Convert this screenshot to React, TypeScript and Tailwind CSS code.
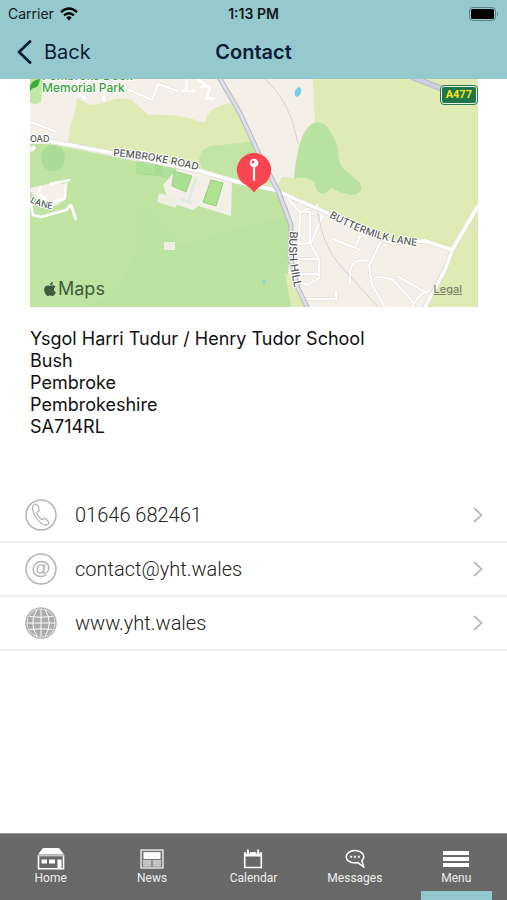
import type { ReactNode } from "react";
import { FaApple } from "react-icons/fa";

type ContactRow = {
  label: string;
  href: string;
  icon: ReactNode;
};

type Tab = {
  label: string;
  icon: ReactNode;
  active?: boolean;
};

const address = ["Ysgol Harri Tudur / Henry Tudor School", "Bush", "Pembroke", "Pembrokeshire", "SA714RL"];

function WifiIcon() {
  return (
    <svg viewBox="0 0 18 14" className="w-[18px] h-[14px]" aria-hidden="true">
      <g fill="none" stroke="#000" strokeWidth="2.4">
        <path d="M1 5.2Q9-2 17 5.2" />
        <path d="M4 8.4q5-4.400 10 0" />
      </g>
      <path d="M6.200 10.400q2.800-2.400 5.600 0L9 13.400z" />
    </svg>
  );
}

function BatteryIcon() {
  return (
    <svg viewBox="0 0 30 14" className="w-[30px] h-[14px]" aria-hidden="true">
      <rect x="0.500" y="0.500" width="26" height="13" rx="3.500" fill="none" stroke="#5d8286" />
      <rect x="2" y="2" width="23" height="10" rx="1.500" />
      <path d="M28 4.500q2 2.500 0 5z" fill="#5d8286" />
    </svg>
  );
}

function PhoneIcon() {
  return (
    <svg viewBox="0 0 32 32" className="w-8 h-8" fill="none" stroke="#b4b4b4" aria-hidden="true">
      <circle cx="16" cy="16" r="15" strokeWidth="1.500" />
      <path
        d="M9 5.500c-2.500 1.500-1.800 6.500 1.200 11.500 3 5 7.500 9.300 10.800 9 1.600-.2 3-1 2.800-2.500-.2-1.500-3-4-4.600-4-1.400 0-1.600 1.500-2.700 1-1.500-.8-4.500-5-4.500-6.800 0-1.300 1.900-.9 2.100-2.400.2-2-1.300-5.300-2.700-6-.8-.4-1.700-.2-2.400.2z"
        strokeWidth="1.300"
        strokeLinejoin="round"
      />
    </svg>
  );
}

function AtIcon() {
  return (
    <svg viewBox="0 0 32 32" className="w-8 h-8" fill="none" stroke="#b4b4b4" aria-hidden="true">
      <circle cx="16" cy="16" r="15" strokeWidth="1.500" />
      <g strokeWidth="1.500" strokeLinecap="round">
        <ellipse cx="15.600" cy="16" rx="3.300" ry="4.200" transform="rotate(20 15.600 16)" />
        <path d="M19.600 11.800l-1.200 6.200c-.3 1.600.4 2.300 1.400 2.200 2.200-.3 4-2.800 4-5.400 0-3.600-3-6.300-7.200-6.300-4.800 0-8.400 3.400-8.400 7.900 0 4.200 3.200 7.100 7.600 7.100 2 0 3.600-.4 5-1.300" />
      </g>
    </svg>
  );
}

function GlobeIcon() {
  return (
    <svg viewBox="0 0 32 32" className="w-8 h-8" aria-hidden="true">
      <circle cx="16" cy="16" r="15" fill="#fff" stroke="#b4b4b4" strokeWidth="1.500" />
      <circle cx="16" cy="16" r="13.700" fill="#acacac" />
      <g fill="none" stroke="#fff" strokeWidth="1">
        <path d="M16 2v28M2 16h28M4.500 9.500q11.500 1.500 23 0M4.500 22.500q11.500-1.500 23 0" />
        <path d="M12 2.500Q3.500 16 12 29.500M20 2.500Q28.500 16 20 29.500" />
      </g>
    </svg>
  );
}

function HomeIcon() {
  return (
    <svg viewBox="0 0 28 22" className="w-7 h-[22px]" aria-hidden="true">
      <path d="M6 0h16l5 6.500H1z" fill="#fff" />
      <path d="M1.500 7v13.700h25V7" fill="none" stroke="#fff" strokeWidth="1.600" />
      <path d="M1 7.600h26" stroke="#c4c4c4" strokeWidth="1.600" />
      <path d="M4.500 11.500h5.500v4H4.500zM12 11.500h6v4h-6zM20.500 11.500h4v9h-4z" fill="#fff" />
    </svg>
  );
}

function NewsIcon() {
  return (
    <svg viewBox="0 0 24 20" className="w-6 h-5" aria-hidden="true">
      <rect x="1" y="1" width="22" height="18" fill="#777" stroke="#fff" strokeWidth="1.200" />
      <path d="M3.500 3.200h17V10h-17z" fill="#fff" />
      <path d="M3 11h8.300v6.500H3zM12.700 11H21v6.500h-8.300z" fill="#cfcfcf" />
      <path d="M3 13h18M3 15.300h18" stroke="#999" strokeWidth="0.500" />
    </svg>
  );
}

function CalendarIcon() {
  return (
    <svg viewBox="0 0 20 20" className="w-5 h-5" aria-hidden="true">
      <path d="M1.700 4h16.600v14.500H1.700z" fill="none" stroke="#fff" strokeWidth="1.600" />
      <path d="M1 3.500h18v4H1zM4 .5h1.800v4H4zM14.200.5H16v4h-1.800z" fill="#fff" />
      <path d="M3.200 3v2M6.600 3v2M13.400 3v2M16.800 3v2" stroke="#686868" strokeWidth="0.800" />
    </svg>
  );
}

function MessagesIcon() {
  return (
    <svg viewBox="0 0 20 20" className="w-5 h-5" aria-hidden="true">
      <path
        d="M10 1.500c-5 0-8.800 2.700-8.800 6.200s3.800 6.200 8.800 6.200c1 0 2-.1 2.900-.3l6 4.600-2.100-6.400c1.300-1.200 2-2.500 2-4.100 0-3.500-3.800-6.200-8.800-6.200z"
        fill="none"
        stroke="#fff"
        strokeWidth="1.500"
        strokeLinejoin="round"
      />
      <path d="M5.200 6.700h2v2h-2zM9 6.700h2v2H9zM12.800 6.700h2v2h-2z" fill="#fff" />
    </svg>
  );
}

function MenuIcon() {
  return (
    <svg viewBox="0 0 26 16" className="w-[26px] h-4" aria-hidden="true">
      <path d="M0 0h26v4H0zM0 6h26v4H0zM0 12h26v4H0z" fill="#fff" />
    </svg>
  );
}

function ChevronRight() {
  return (
    <svg viewBox="0 0 10 16" className="w-[10px] h-4" fill="none" stroke="#b9b9bb" strokeWidth="1.800" aria-hidden="true">
      <path d="M1 1l7.500 7L1 15" />
    </svg>
  );
}

const rows: ContactRow[] = [
  { label: "01646 682461", href: "tel:01646682461", icon: <PhoneIcon /> },
  { label: "contact@yht.wales", href: "mailto:contact@yht.wales", icon: <AtIcon /> },
  { label: "www.yht.wales", href: "#www", icon: <GlobeIcon /> },
];

const tabs: Tab[] = [
  { label: "Home", icon: <HomeIcon /> },
  { label: "News", icon: <NewsIcon /> },
  { label: "Calendar", icon: <CalendarIcon /> },
  { label: "Messages", icon: <MessagesIcon /> },
  { label: "Menu", icon: <MenuIcon />, active: true },
];

const estateRoads =
  "M284 194l16 18-1 32 12-1 14-33M299 212h11v30M309 242l10 17v19l-12 7-12-5M296 259h23M295 274h23M300 212l17-7 5 14M305 299h29";
const laneRoads =
  "M333 239l27 11M362 231l-6 15M381 241l-12 25 3 19 14 24M369 261q-18-4-19 12v10M373 280q5-6 20 0l22 24M397 276l30 17M412 307q8-15 17-16M325 299h11v-7M424 307l7-16";
const townRoad = "M30 138L60 143 112 153 200 171 238 182 275 190 325 212 358 228 392 243 425 241 452 250M478 206L452 250 445 270 425 307";
const hillRoad = "M219 77L240 113 258 152 279 193 291 225 290 257 298 288 308 309";

function SchoolMap() {
  return (
    <svg viewBox="30 79 448 228" className="block w-full h-auto" role="img" aria-label="Map of the school">
      <defs>
        <path id="pembroke-road" d="M113 156Q160 160 208 173" />
        <path id="buttermilk" d="M329 217Q375 244 430 247" />
        <path id="bush-hill" d="M290 231Q286 262 298 300" />
        <path id="lane" d="M30 202Q42 209 62 210" />
      </defs>

      {/* Land */}
      <path d="M30 79h448v228H30z" fill="#f4f0e8" />
      <path
        d="M77 98L90 105 105 103Q118 96 132 100L148 115Q180 113 205 123 208 109 218 107 226 103 232 103L262 155 272 188 200 172 68 144 70 128 75 112z"
        fill="#dfeab4"
      />
      <path d="M313 79h165v228h-55L452 250 425 241 405 244 345 222 276 190 282 177 296 178 315 122 314 102z" fill="#dfeab4" />
      <path d="M199 161Q200 148 212 146L240 143 255 141 266 165 262 187 235 182 203 170z" fill="#c2e5a3" />
      <path
        d="M313 123Q324 120 329 130 337 140 338 150 338 164 344 169L360 183Q365 194 351 195 340 193 332 188L325 193Q317 196 314 182 303 175 294 179 295 165 299 146 304 128 313 123z"
        fill="#b9e2a0"
      />
      <path d="M30 144L50 144 200 174 275 190 287 206 292 230 288 273 300 307H30z" fill="#c0e3a2" />
      <path d="M137 207Q150 200 180 245L290 215 288 275 300 307H92Q130 280 137 250z" fill="#b9e19f" opacity="0.700" />
      <path d="M285 273l9 4 12 30h-15z" fill="#dfeab4" />
      <path d="M30 79h14l-3 23q-6 4-11 0z" fill="#c2e8a7" />
      <ellipse cx="53" cy="158" rx="12" ry="13" fill="#abdc96" />
      <path d="M137 162l25 2 18 4v16l-14-7-29-4z" fill="#b0e19a" stroke="#a6db91" />
      <path d="M159 163v12" stroke="#a6db91" strokeWidth="7" />

      {/* School grounds */}
      <path d="M163 185l14-16 18 3 37 10-1 34-32-10-6 4-24-8z" fill="#f4f0e8" />
      <path d="M174 171l18 5-6 16-14-6z" fill="#a9df91" stroke="#9fd589" />
      <path d="M211 180l12 3-7 23-13-4z" fill="#aee291" stroke="#92ce7b" />
      <path d="M196 178l-7 22M180 199l12 4" stroke="#e1eae3" strokeWidth="3" />
      <path d="M166 186l18 6M159 193l19 6-2 9-19-6zM164 242h11v8h-11z" fill="#eeefe0" />
      <path d="M30 188l22-5 15 1-2 16-10 6-15-3-10-12z" fill="#f4f0e8" />

      {/* Minor roads */}
      <g fill="none" stroke="#fff" strokeWidth="2.500" strokeLinejoin="round">
        <path d="M50 184l20-4M31 203l2 12 8 2 25-7 5-5 5 15M41 186l-3 7 12 10 15-5 1-15" />
        <path d="M30 150l5-3" strokeWidth="4" />
        <path d="M181 91h14M187 79l-1 13M197 79l13 9-4 12M206 98l9 1M200 87l8-1" />
        <path d="M78 79v14l8 6M104 90v11" />
      </g>
      <g fill="none" stroke="#e2dedb" strokeWidth="3">
        <path d={estateRoads} />
        <path d={laneRoads} />
        <path d="M30 122l27 10M104 79l48 21 6-16 20 7" />
      </g>
      <g fill="none" stroke="#fff" strokeWidth="2">
        <path d={estateRoads} />
        <path d={laneRoads} />
        <path d="M30 122l27 10M104 79l48 21 6-16 20 7" />
      </g>
      <path d="M265 79q23 21 30 52l3 13M318 213q4 30 20 50l40 44" fill="none" stroke="#d6d0c9" />

      {/* Main roads */}
      <g fill="none" strokeLinejoin="round">
        <path d={townRoad} stroke="#dcdcd0" strokeWidth="5" />
        <path d={townRoad} stroke="#fff" strokeWidth="3.500" />
        <path d={hillRoad} stroke="#b6b9c6" strokeWidth="5" />
        <path d={hillRoad} stroke="#dcdee8" strokeWidth="3" />
        <path d="M412 77l38 15" stroke="#b9bccb" strokeWidth="6" />
        <path d="M412 77l38 15" stroke="#cdd0dd" strokeWidth="4" />
      </g>

      {/* Ponds */}
      <ellipse cx="298" cy="92" rx="3" ry="5" fill="#72cdef" transform="rotate(20 298 92)" />
      <circle cx="264" cy="282" r="2" fill="#8bd5df" />

      {/* Labels */}
      <g
        fontFamily="Inter, sans-serif"
        fontSize="10"
        fontWeight="500"
        fill="#55585a"
        stroke="#fff"
        strokeWidth="2"
        strokeLinejoin="round"
        style={{ paintOrder: "stroke" }}
      >
        <text>
          <textPath href="#pembroke-road">PEMBROKE ROAD</textPath>
        </text>
        <text>
          <textPath href="#buttermilk">BUTTERMILK LANE</textPath>
        </text>
        <text fontSize="11">
          <textPath href="#bush-hill">BUSH HILL</textPath>
        </text>
        <text fontSize="9">
          <textPath href="#lane">LANE</textPath>
        </text>
        <text x="30" y="142" fontSize="9">
          OAD
        </text>
        <g fontSize="12" fill="#3c9f42">
          <text x="42" y="80">
            Pembroke Dock
          </text>
          <text x="42" y="92">
            Memorial Park
          </text>
        </g>
      </g>
      <path d="M30 86q2-6 10-7-1 9-7 9l-3 3z" fill="#36b037" />

      {/* Pin */}
      <path d="M254 153a17 17 0 0 1 9 31.500q-5 2.500-9 8-4-5.500-9-8a17 17 0 0 1 9-31.500z" fill="#fa4450" />
      <path d="M254 164v16" stroke="#fff" strokeWidth="2.200" strokeLinecap="round" />
      <circle cx="254" cy="163" r="4.300" fill="#fff" />
      <circle cx="253" cy="162" r="1.500" fill="#fa4450" />
    </svg>
  );
}

export default function App() {
  return (
    <div className="flex min-h-screen flex-col bg-white font-['Inter',sans-serif] text-[#1c1c1c]">
      <header className="bg-[#96c9ce]">
        <div className="grid h-7 grid-cols-3 items-center px-2 text-sm text-[#10181c]">
          <div className="flex items-center gap-1.5">
            <span>Carrier</span>
            <WifiIcon />
          </div>
          <span className="text-center font-semibold">1:13 PM</span>
          <div className="flex justify-end">
            <BatteryIcon />
          </div>
        </div>
        <div className="grid h-[51px] grid-cols-3 items-center px-4 pb-1 text-[#0b1c36]">
          <button type="button" className="flex items-center gap-3 text-xl leading-6">
            <svg viewBox="0 0 16 24" className="h-6 w-4" fill="none" stroke="currentColor" strokeWidth="2.800" aria-hidden="true">
              <path d="M14 1.500L3 12l11 10.500" strokeLinecap="round" strokeLinejoin="round" />
            </svg>
            Back
          </button>
          <h1 className="text-center text-xl leading-6 font-semibold">Contact</h1>
        </div>
      </header>

      <main className="flex-1">
        <div className="relative mr-[29px] ml-[30px]">
          <SchoolMap />
          <div className="absolute bottom-1.5 left-3 flex items-center text-lg leading-6 text-[#3f5a3d]">
            <FaApple className="size-4" aria-hidden="true" />
            <span>Maps</span>
          </div>
          <a href="#legal" className="absolute right-4 bottom-3 text-[11px] leading-3 font-medium text-[#7b7e6c] underline">
            Legal
          </a>
          <span className="absolute top-1.5 right-0 rounded border border-[#2c7a50] bg-[#e6efe0] p-px">
            <span className="block rounded-xs bg-[#207648] px-1 font-['Roboto',sans-serif] text-[11px] leading-4 font-bold text-[#f6e51e]">
              A477
            </span>
          </span>
        </div>

        <address className="mx-[30px] mt-[21px] text-lg leading-[22px] text-[#111] not-italic">
          {address.map((line) => (
            <div key={line}>{line}</div>
          ))}
        </address>

        <ul className="mt-[51px]">
          {rows.map((row) => (
            <li key={row.label} className="border-b-2 border-[#efefef]">
              <a
                href={row.href}
                className="flex h-[52px] items-center pr-6 pl-[25px] font-['Roboto',sans-serif] text-xl font-light text-[#222]"
              >
                {row.icon}
                <span className="ml-[18px] flex-1">{row.label}</span>
                <ChevronRight />
              </a>
            </li>
          ))}
        </ul>
      </main>

      <nav className="grid grid-cols-5 border-t border-[#999] bg-[#686868]">
        {tabs.map((tab) => (
          <button
            key={tab.label}
            type="button"
            className="relative flex h-[66px] flex-col items-center pt-[13px] font-['Roboto',sans-serif] text-xs leading-[14px] text-[#efefef]"
          >
            <span className="flex h-6 items-center">{tab.icon}</span>
            {tab.label}
            {tab.active && <span className="absolute inset-x-[15px] bottom-0 h-[9px] bg-[#93c9ce]" />}
          </button>
        ))}
      </nav>
    </div>
  );
}
